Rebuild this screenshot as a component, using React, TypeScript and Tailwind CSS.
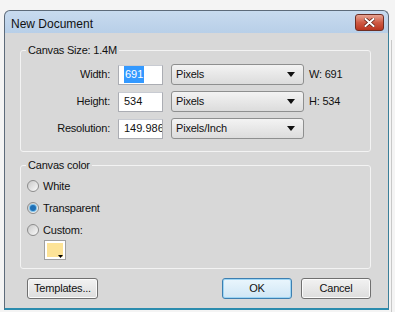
import React from 'react';

const font = { fontFamily: '"Liberation Sans", Arial, sans-serif' };

const Arrow: React.FC = () => (
  <svg width="8" height="5" viewBox="0 0 8 5" className="block">
    <path d="M0 0 H8 L4 5 Z" fill="#111" />
  </svg>
);

const Select: React.FC<{ label: string }> = ({ label }) => (
  <div className="flex h-[21px] w-[133px] items-center justify-between rounded-[3px] border border-[#8e8f8f] bg-gradient-to-b from-[#f3f3f3] to-[#dcdcdc] pl-[4px] pr-[8px] text-[11px] tracking-[-0.2px] text-[#111]">
    <span>{label}</span>
    <Arrow />
  </div>
);

const Field: React.FC<{ value: string; selected?: boolean }> = ({ value, selected }) => (
  <div className="flex h-[20px] w-[45px] items-center overflow-hidden whitespace-nowrap border border-[#abadb3] border-t-[#c8cbd2] bg-white pl-[5px] text-[11px] text-[#111]">
    {selected ? <span className="bg-[#3399ff] px-px text-white">{value}</span> : value}
  </div>
);

const Row: React.FC<{ label: string; value: string; unit: string; note?: string; selected?: boolean }> = ({
  label,
  value,
  unit,
  note,
  selected,
}) => (
  <div className="flex h-[21px] items-center">
    <div className="w-[89px] text-right text-[11px] tracking-[-0.2px] text-[#111]">{label}</div>
    <div className="ml-[8px]">
      <Field value={value} selected={selected} />
    </div>
    <div className="ml-[8px]">
      <Select label={unit} />
    </div>
    {note && <div className="ml-[5px] text-[11px] tracking-[-0.2px] text-[#111]">{note}</div>}
  </div>
);

const Radio: React.FC<{ label: string; checked?: boolean }> = ({ label, checked }) => (
  <div className="flex h-[16px] items-center">
    <div className="flex h-[12px] w-[12px] items-center justify-center rounded-full border border-[#8c8c8c] bg-gradient-to-br from-[#c9c9c9] to-[#fbfbfb]">
      {checked && (
        <div className="h-[6px] w-[6px] rounded-full bg-[#1f6fb5] shadow-[0_0_0_1px_#7fc3ec]" />
      )}
    </div>
    <span className="ml-[4px] text-[11px] tracking-[-0.2px] text-[#111]">{label}</span>
  </div>
);

const Button: React.FC<{ label: string; primary?: boolean; width: string }> = ({ label, primary, width }) => (
  <div
    className={`flex h-[21px] ${width} items-center justify-center rounded-[3px] border text-[11px] tracking-[-0.2px] text-[#111] ${
      primary
        ? 'border-[#3c7fb1] bg-gradient-to-b from-[#eaf6fd] to-[#cfe6f5] shadow-[inset_0_0_0_1px_#9dd5f4]'
        : 'border-[#707070] bg-gradient-to-b from-[#f2f2f2] to-[#dddddd] shadow-[inset_0_0_0_1px_#fbfbfb]'
    }`}
  >
    {label}
  </div>
);

export default function App() {
  return (
    <div className="relative h-[312px] w-[395px] overflow-hidden bg-[#f4f4f4] pl-[4px] pt-[10px]" style={font}>
      <div className="absolute right-[3px] top-[40px] h-[272px] w-px bg-[#c8c8c8]" />
      <div className="flex h-[300px] w-[385px] flex-col">
        {/* title bar */}
        <div className="flex h-[23px] items-center justify-between rounded-t-[6px] border border-b-0 border-[#5d6b7a] bg-gradient-to-b from-[#c8dbef] to-[#b8cfe8] pl-[6px] pr-[4px]">
          <span className="pt-[3px] text-[12px] text-[#111]">New Document</span>
          <div className="flex h-[17px] w-[29px] items-center justify-center rounded-[3px] border border-[#6e2e24] bg-gradient-to-b from-[#e6a493] via-[#cf5b45] to-[#b9341f]">
            <svg width="11" height="9" viewBox="0 0 11 9">
              <path d="M1.5 1 L9.5 8 M9.5 1 L1.5 8" stroke="#5b1c12" strokeWidth="3.4" strokeLinecap="square" />
              <path d="M1.5 1 L9.5 8 M9.5 1 L1.5 8" stroke="#ffffff" strokeWidth="2" strokeLinecap="square" />
            </svg>
          </div>
        </div>

        {/* body */}
        <div className="flex flex-1 flex-col border-b-[2px] border-l border-r border-l-[#5d6b7a] border-r-[#3a7f99] border-b-[#2b8cae] bg-[#d8d8d8] pb-[8px] pl-[15px]">
          <fieldset className="mt-[10px] w-[351px] rounded-[3px] border border-[#f3f3f3] pb-[12px]">
            <legend className="ml-[5px] px-[2px] text-[11px] leading-[14px] tracking-[-0.2px] text-[#111]">
              Canvas Size: 1.4M
            </legend>
            <div className="mt-[7px] flex flex-col gap-[6px]">
              <Row label="Width:" value="691" unit="Pixels" note="W: 691" selected />
              <Row label="Height:" value="534" unit="Pixels" note="H: 534" />
              <Row label="Resolution:" value="149.986" unit="Pixels/Inch" />
            </div>
          </fieldset>

          <fieldset className="mt-[6px] w-[351px] rounded-[3px] border border-[#f3f3f3] pb-[8px] pl-[6px]">
            <legend className="ml-[-1px] px-[2px] text-[11px] leading-[14px] tracking-[-0.2px] text-[#111]">
              Canvas color
            </legend>
            <div className="mt-[6px] flex flex-col gap-[6px]">
              <Radio label="White" />
              <Radio label="Transparent" checked />
              <Radio label="Custom:" />
            </div>
            <div className="relative ml-[17px] mt-[2px] flex h-[20px] w-[22px] items-center justify-center border border-[#a0a0a0] bg-white">
              <div className="h-[14px] w-[16px] bg-[#fde397]" />
              <svg width="5" height="3" viewBox="0 0 5 3" className="absolute bottom-[1px] right-[2px]">
                <path d="M0 0 H5 L2.5 3 Z" fill="#000" />
              </svg>
            </div>
          </fieldset>

          <div className="mt-[9px] flex w-[351px] items-center">
            <div className="ml-[7px]">
              <Button label="Templates..." width="w-[71px]" />
            </div>
            <div className="ml-auto flex gap-[9px]">
              <Button label="OK" primary width="w-[70px]" />
              <Button label="Cancel" width="w-[70px]" />
            </div>
          </div>
        </div>
      </div>
    </div>
  );
}
